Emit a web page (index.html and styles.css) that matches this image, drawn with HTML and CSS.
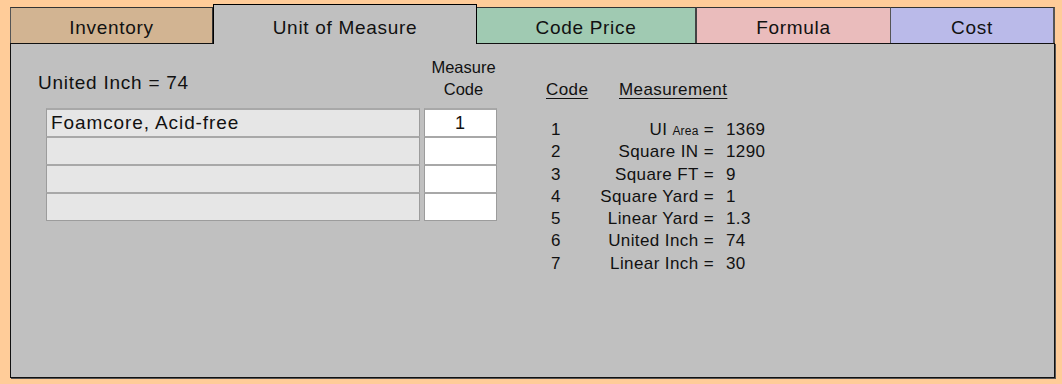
FILE: index.html
```html
<!DOCTYPE html>
<html>
<head>
<meta charset="utf-8">
<link rel="stylesheet" href="styles.css">
</head>
<body>
<div class="frame">
  <div class="tabs">
    <div class="tab tab-inventory">Inventory</div>
    <div class="tab tab-active">Unit of Measure</div>
    <div class="tab tab-price">Code Price</div>
    <div class="tab tab-formula">Formula</div>
    <div class="tab tab-cost">Cost</div>
  </div>
  <div class="panel">
    <div class="left">
      <div class="left-head">
        <div class="title">United Inch = 74</div>
        <div class="mc-head">Measure<br>Code</div>
      </div>
      <div class="rows">
        <div class="name">Foamcore, Acid-free</div><div class="code">1</div>
        <div class="name"></div><div class="code"></div>
        <div class="name"></div><div class="code"></div>
        <div class="name"></div><div class="code"></div>
      </div>
    </div>
    <div class="right">
      <div class="right-head">
        <span class="h-code">Code</span>
        <span class="h-meas">Measurement</span>
      </div>
      <div class="mlist">
        <div class="n">1</div><div class="lbl">UI <span class="small">Area</span> =</div><div class="val">1369</div>
        <div class="n">2</div><div class="lbl">Square IN =</div><div class="val">1290</div>
        <div class="n">3</div><div class="lbl">Square FT =</div><div class="val">9</div>
        <div class="n">4</div><div class="lbl">Square Yard =</div><div class="val">1</div>
        <div class="n">5</div><div class="lbl">Linear Yard =</div><div class="val">1.3</div>
        <div class="n">6</div><div class="lbl">United Inch =</div><div class="val">74</div>
        <div class="n">7</div><div class="lbl">Linear Inch =</div><div class="val">30</div>
      </div>
    </div>
  </div>
</div>
</body>
</html>
```
FILE: styles.css
```css
html, body {
  margin: 0;
  padding: 0;
  background: #ffcc99;
}
body {
  font-family: "Liberation Sans", Arial, sans-serif;
  color: #111;
  width: 1062px;
  height: 384px;
  overflow: hidden;
}
.frame {
  padding: 4px 0 0 10px;
  width: 1045px;
}
.tabs {
  display: flex;
  align-items: flex-end;
  height: 39px;
}
.tab {
  box-sizing: border-box;
  height: 36px;
  border: 1px solid #333;
  border-bottom: none;
  border-left: none;
  font-size: 19px;
  letter-spacing: 0.7px;
  display: flex;
  align-items: flex-start;
  justify-content: center;
  padding-top: 10px;
  line-height: 19px;
}
.tab-inventory {
  width: 203px;
  background: #d2b492;
  border-left: 1px solid #555;
}
.tab-active {
  width: 264px;
  height: 40px;
  margin-bottom: -1px;
  background: #c0c0c0;
  border: 1px solid #000;
  border-bottom: none;
  position: relative;
  z-index: 2;
  padding-top: 13px;
}
.tab-price {
  width: 220px;
  background: #a0cab2;
  border-left: none;
  border-right: 2px solid #444;
}
.tab-formula {
  width: 194px;
  background: #eabcbc;
  border-right: 1px solid #555;
}
.tab-cost {
  width: 164px;
  background: #babae9;
  border-right: 2px solid #555;
}
.panel {
  box-sizing: border-box;
  height: 335px;
  background: #c0c0c0;
  border: 1px solid #111;
  box-shadow: 1px 1px 0 #555;
  display: flex;
  padding: 12px 0 0 27px;
}
.left {
  width: 459px;
}
.left-head {
  display: flex;
  justify-content: space-between;
  align-items: flex-start;
}
.title {
  font-size: 19px;
  letter-spacing: 0.75px;
  line-height: 22px;
  margin-top: 16px;
}
.mc-head {
  box-sizing: border-box;
  width: 81px;
  padding-left: 14px;
  text-align: center;
  font-size: 16.5px;
  line-height: 22px;
}
.rows {
  display: grid;
  grid-template-columns: 374px 73px;
  grid-auto-rows: 28px;
  column-gap: 4px;
  margin: 8px 0 0 8px;
  width: 451px;
}
.name, .code {
  box-sizing: border-box;
  border: 1px solid #9c9c9c;
  border-bottom-width: 0;
  font-size: 19px;
  letter-spacing: 0.9px;
  line-height: 26px;
}
.rows > :nth-last-child(-n+2) {
  border-bottom-width: 1px;
  height: 29px;
}
.name {
  background: #e6e6e6;
  padding-left: 4px;
  border-top: 2px solid #a8a8a8;
}
.code {
  background: #fff;
  text-align: center;
  border-top: 2px solid #a8a8a8;
  font-size: 18px;
}
.right {
  margin-left: 49px;
  padding-top: 24px;
}
.right-head {
  display: flex;
  font-size: 17px;
  letter-spacing: 0.4px;
  line-height: 20px;
}
.h-code, .h-meas {
  text-decoration: underline;
  text-underline-offset: 3px;
}
.h-code {
  width: 73px;
}
.mlist {
  display: grid;
  grid-template-columns: 50px 118px auto;
  grid-auto-rows: 22.3px;
  column-gap: 0;
  margin-top: 19px;
  font-size: 17px;
  letter-spacing: 0.4px;
  line-height: 22.3px;
}
.n {
  padding-left: 5px;
}
.lbl {
  text-align: right;
  white-space: nowrap;
}
.val {
  padding-left: 12px;
}
.small {
  font-size: 12px;
  letter-spacing: 0.2px;
}
```
